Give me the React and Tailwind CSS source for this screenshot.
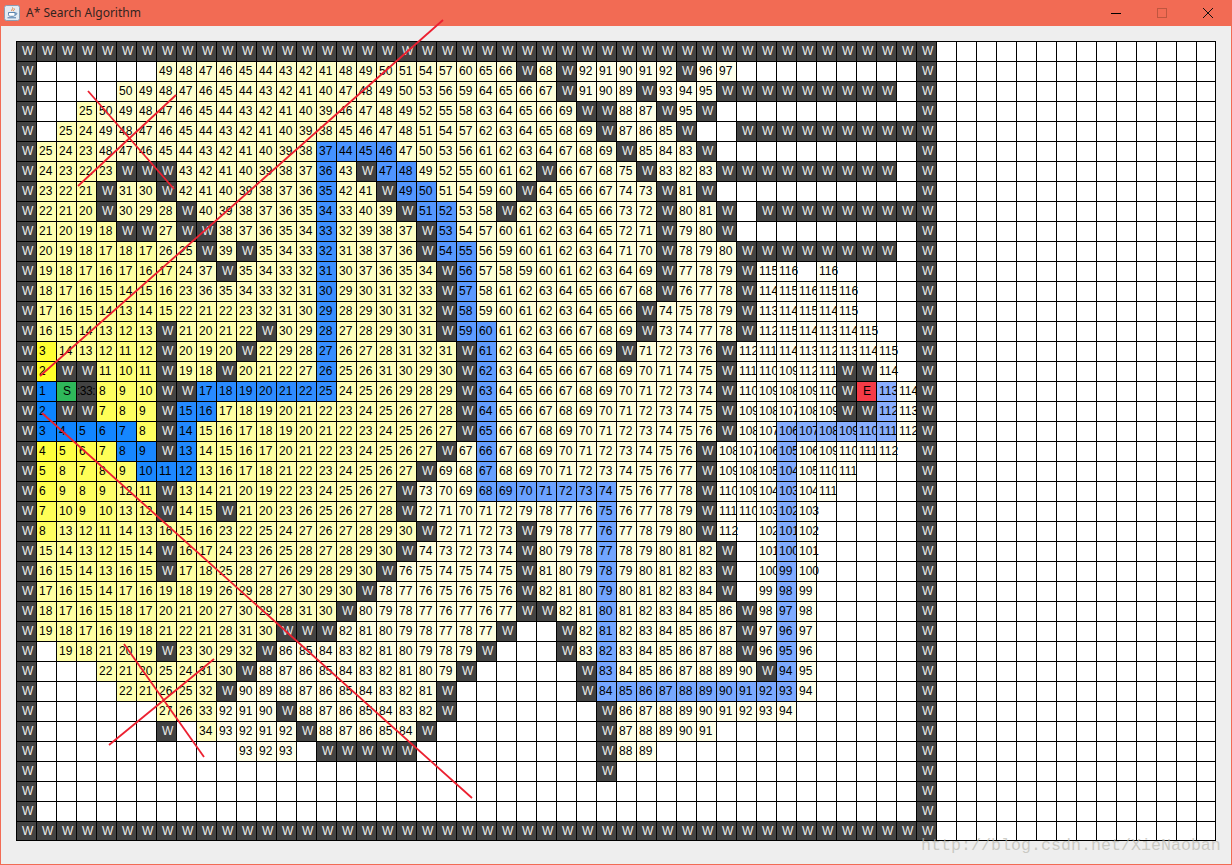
import React from "react";

const W10 = "W W W W W W W W W W";

// one string per grid row, columns 0-45 (the rest of the 60 columns stay empty)
// b = cell on the final path, S/E = start/end, X = the garbled cell beside the start
const ROWS = [
  "W W W W W W W W W W W W W W W W W W W W W W W W W W W W W W W W W W W W W W W W W W W W W W",
  "W . . . . . . 49 48 47 46 45 44 43 42 41 48 49 50 51 54 57 60 65 66 W 68 W 92 91 90 91 92 W 96 97 . . . . . . . . . W",
  "W . . . . 50 49 48 47 46 45 44 43 42 41 40 47 48 49 50 53 56 59 64 65 66 67 W 91 90 89 W 93 94 95 W W W W W W W W W . W",
  "W . . 25 50 49 48 47 46 45 44 43 42 41 40 39 46 47 48 49 52 55 58 63 64 65 66 69 W W 88 87 W 95 W . . . . . . . . . . W",
  "W . 25 24 49 48 47 46 45 44 43 42 41 40 39 38 45 46 47 48 51 54 57 62 63 64 65 68 69 W 87 86 85 W . . W W W W W W W W W W",
  "W 25 24 23 48 47 46 45 44 43 42 41 40 39 38 b37 b44 b45 b46 47 50 53 56 61 62 63 64 67 68 69 W 85 84 83 W . . . . . . . . . . W",
  "W 24 23 22 23 W W W 43 42 41 40 39 38 37 b36 43 W b47 b48 49 52 55 60 61 62 W 66 67 68 75 W 83 82 83 W W W W W W W W W . W",
  "W 23 22 21 W 31 30 W 42 41 40 39 38 37 36 b35 42 41 W b49 b50 51 54 59 60 W 64 65 66 67 74 73 W 81 W . . . . . . . . . . W",
  "W 22 21 20 W 30 29 28 W 40 39 38 37 36 35 b34 33 40 39 W b51 b52 53 58 W 62 63 64 65 66 73 72 W 80 81 W . W W W W W W W W W",
  "W 21 20 19 18 W W 27 W W 38 37 36 35 34 b33 32 39 38 37 W b53 54 57 60 61 62 63 64 65 72 71 W 79 80 W . . . . . . . . . W",
  "W 20 19 18 17 18 17 26 25 W 39 W 35 34 33 b32 31 38 37 36 W b54 b55 56 59 60 61 62 63 64 71 70 W 78 79 80 W W W W W W W W . W",
  "W 19 18 17 16 17 16 17 24 37 W 35 34 33 32 b31 30 37 36 35 34 W b56 57 58 59 60 61 62 63 64 69 W 77 78 79 W 115 116 . 116 . . . . W",
  "W 18 17 16 15 14 15 16 23 36 35 34 33 32 31 b30 29 30 31 32 33 W b57 58 61 62 63 64 65 66 67 68 W 76 77 78 W 114 115 116 115 116 . . . W",
  "W 17 16 15 14 13 14 15 22 21 22 23 32 31 30 b29 28 29 30 31 32 W b58 59 60 61 62 63 64 65 66 W 74 75 78 79 W 113 114 115 114 115 . . . W",
  "W 16 15 14 13 12 13 W 21 20 21 22 W 30 29 b28 27 28 29 30 31 W b59 b60 61 62 63 66 67 68 69 W 73 74 77 78 W 112 115 114 113 114 115 . . W",
  "W 3 14 13 12 11 12 W 20 19 20 W 22 29 28 b27 26 27 28 31 32 31 W b61 62 63 64 65 66 69 W 71 72 73 76 W 112 111 114 113 112 113 114 115 . W",
  "W 2 W W 11 10 11 W 19 18 W 20 21 22 27 b26 25 26 31 30 29 30 W b62 63 64 65 66 67 68 69 70 71 74 75 W 111 110 109 112 111 W W 114 . W",
  "W b1 S X 8 9 10 W W b17 b18 b19 b20 b21 b22 b25 24 25 26 29 28 29 W b63 64 65 66 67 68 69 70 71 72 73 74 W 110 109 108 109 110 W E b113 114 W",
  "W b2 W W 7 8 9 W b15 b16 17 18 19 20 21 22 23 24 25 26 27 28 W b64 65 66 67 68 69 70 71 72 73 74 75 W 109 108 107 108 109 W W b112 113 W",
  "W b3 b4 b5 b6 b7 8 W b14 15 16 17 18 19 20 21 22 23 24 25 26 27 W b65 66 67 68 69 70 71 72 73 74 75 76 W 108 107 b106 b107 b108 b109 b110 b111 112 W",
  "W 4 5 6 7 b8 b9 W b13 14 15 16 17 20 21 22 23 24 25 26 27 W 67 b66 67 68 69 70 71 72 73 74 75 76 W 108 107 106 b105 106 109 110 111 112 . W",
  "W 5 8 7 8 9 b10 b11 b12 13 16 17 18 21 22 23 24 25 26 27 W 69 68 b67 68 69 70 71 72 73 74 75 76 77 W 109 108 105 b104 105 110 111 . . . W",
  "W 6 9 8 9 12 11 W 13 14 21 20 19 22 23 24 25 26 27 W 73 70 69 b68 b69 b70 b71 b72 b73 b74 75 76 77 78 W 110 109 104 b103 104 111 . . . . W",
  "W 7 10 9 10 13 12 W 14 15 W 21 20 23 26 25 26 27 28 W 72 71 70 71 72 79 78 77 76 b75 76 77 78 79 W 111 110 103 b102 103 . . . . . W",
  "W 8 13 12 11 14 13 16 15 16 23 22 25 24 27 26 27 28 29 30 W 72 71 72 73 W 79 78 77 b76 77 78 79 80 W 112 . 102 b101 102 . . . . . W",
  "W 15 14 13 12 15 14 W 16 17 24 23 26 25 28 27 28 29 30 W 74 73 72 73 74 W 80 79 78 b77 78 79 80 81 82 W . 101 b100 101 . . . . . W",
  "W 16 15 14 13 16 15 W 17 18 25 28 27 26 29 28 29 30 W 76 75 74 75 74 75 W 81 80 79 b78 79 80 81 82 83 W . 100 b99 100 . . . . . W",
  "W 17 16 15 14 17 16 19 18 19 26 29 28 27 30 29 30 W 78 77 76 75 76 75 76 W 82 81 80 b79 80 81 82 83 84 W . 99 b98 99 . . . . . W",
  "W 18 17 16 15 18 17 20 21 20 27 30 29 28 31 30 W 80 79 78 77 76 77 76 77 W W 82 81 b80 81 82 83 84 85 86 W 98 b97 98 . . . . . W",
  "W 19 18 17 16 19 18 21 22 21 28 31 30 W W W 82 81 80 79 78 77 78 77 W . . W 82 b81 82 83 84 85 86 87 W 97 b96 97 . . . . . W",
  "W . 19 18 21 20 19 W 23 30 29 32 W 86 85 84 83 82 81 80 79 78 79 W . . . W 83 b82 83 84 85 86 87 88 W 96 b95 96 . . . . . W",
  "W . . . 22 21 20 25 24 31 30 W 88 87 86 85 84 83 82 81 80 79 W . . . . . W b83 84 85 86 87 88 89 90 W b94 95 . . . . . W",
  "W . . . . 22 21 26 25 32 W 90 89 88 87 86 85 84 83 82 81 W . . . . . . W b84 b85 b86 b87 b88 b89 b90 b91 b92 b93 94 . . . . . W",
  "W . . . . . . 27 26 33 92 91 90 W 88 87 86 85 84 83 82 W . . . . . . . W 86 87 88 89 90 91 92 93 94 . . . . . . W",
  "W . . . . . . W . 34 93 92 91 92 W 88 87 86 85 84 W . . . . . . . . W 87 88 89 90 91 . . . . . . . . . . W",
  "W . . . . . . . . . . 93 92 93 . W W W W W . . . . . . . . . W 88 89 . . . . . . . . . . . . . W",
  "W . . . . . . . . . . . . . . . . . . . . . . . . . . . . W . . . . . . . . . . . . . . . W",
  "W . . . . . . . . . . . . . . . . . . . . . . . . . . . . . . . . . . . . . . . . . . . . W",
  "W . . . . . . . . . . . . . . . . . . . . . . . . . . . . . . . . . . . . . . . . . . . . W",
  `${W10} ${W10} ${W10} ${W10} W W W W W W`,
];

const YELLOW_STOPS = [
  [1, 32],
  [8, 96],
  [13, 150],
  [25, 184],
  [50, 208],
  [90, 232],
  [116, 242],
];
const BLUE_STOPS = [
  [1, 10, 132],
  [20, 46, 140],
  [50, 84, 150],
  [75, 112, 164],
  [115, 140, 176],
];

// walk the stops and interpolate every channel after the first column
const shade = (stops, n) => {
  let lo = stops[0];
  let hi = stops[stops.length - 1];
  for (let i = 0; i < stops.length - 1; i++) {
    if (n >= stops[i][0] && n <= stops[i + 1][0]) {
      lo = stops[i];
      hi = stops[i + 1];
      break;
    }
  }
  const t = Math.min(1, Math.max(0, (n - lo[0]) / (hi[0] - lo[0])));
  return lo.slice(1).map((v, i) => Math.round(v + (hi[i + 1] - v) * t));
};

const Cell = ({ value }) => {
  const base = "border-l border-t border-black leading-[19px] whitespace-nowrap";

  if (value === ".") return <div className={base}></div>;
  if (value === "W")
    return <div className={`${base} relative bg-[#434343] text-[#ececec] pl-[5px]`}>W</div>;
  if (value === "S")
    return <div className={`${base} relative bg-[#2fb85a] text-black pl-[6px]`}>S</div>;
  if (value === "E")
    return <div className={`${base} relative bg-[#f53b47] text-black pl-[6px]`}>E</div>;
  if (value === "X")
    return <div className={`${base} relative bg-[#434343] text-black tracking-[-0.5px]`}>:33:</div>;

  if (value[0] === "b") {
    const n = parseInt(value.slice(1));
    const [r, g] = shade(BLUE_STOPS, n);
    return (
      <div
        className={`${base} relative text-black pl-[2px]`}
        style={{ backgroundColor: `rgb(${r},${g},255)` }}
      >
        {n}
      </div>
    );
  }

  const n = parseInt(value);
  const [b] = shade(YELLOW_STOPS, n);
  return (
    <div
      className={`${base} relative text-black pl-[2px]`}
      style={{ backgroundColor: `rgb(255,255,${b})` }}
    >
      {n}
    </div>
  );
};

const JavaIcon = () => (
  <svg width="16" height="16" viewBox="0 0 16 16" fill="none">
    <rect x="0.5" y="0.5" width="15" height="15" rx="2" fill="#e4ebf3" stroke="#8b9db3" />
    <path d="M8.5 2.5c1.5 1.2-1.8 2.2-.6 3.6M10.4 3.6c.8.9-1.5 1.4-.7 2.6" stroke="#e2762a" strokeWidth="1" />
    <path d="M4.5 7.5h6.5v2.2c0 1-.9 1.6-1.8 1.6H6.3c-.9 0-1.8-.6-1.8-1.6z" fill="#fff" stroke="#4a78a8" strokeWidth="0.9" />
    <path d="M11 8h1.2c1 0 1 1.8-1.2 2" stroke="#4a78a8" strokeWidth="0.9" />
    <path d="M3.5 12.8h8.5" stroke="#4a78a8" strokeWidth="1" />
  </svg>
);

const RED_LINES = [
  [442, 20, 39, 376],
  [87, 91, 173, 189],
  [175, 95, 77, 186],
  [41, 413, 471, 798],
  [213, 659, 108, 745],
  [123, 644, 203, 757],
];

export default function App() {
  return (
    <div className="relative w-[1232px] h-[865px] flex flex-col bg-[#eeeeee] border-x border-b border-[#f26b54] overflow-hidden font-['Liberation_Sans',sans-serif]">
      {/* title bar */}
      <div className="flex items-center h-[26px] shrink-0 bg-[#f26b54] pl-[3px]">
        <JavaIcon />
        <span className="ml-[6px] text-[12px] text-[#33241f] font-['Noto_Sans',sans-serif]">
          A* Search Algorithm
        </span>
        <div className="ml-auto flex h-full">
          <div className="w-[46px] flex items-center justify-center">
            <div className="w-[10px] h-px bg-black"></div>
          </div>
          <div className="w-[46px] flex items-center justify-center">
            <div className="w-[10px] h-[10px] border border-[#c0563f]"></div>
          </div>
          <div className="w-[46px] flex items-center justify-center">
            <svg width="10" height="10" viewBox="0 0 10 10" stroke="#111111" strokeWidth="1">
              <path d="M0 0l10 10M10 0L0 10" />
            </svg>
          </div>
        </div>
      </div>

      {/* map panel */}
      <div className="pl-[15px] pt-[15px]">
        <div className="grid grid-cols-[repeat(60,20px)] grid-rows-[repeat(40,20px)] w-[1200px] h-[800px] bg-white border-r border-b border-black overflow-hidden text-[12px]">
          {ROWS.map((row, r) => {
            const cells = row.split(" ");
            return Array.from({ length: 60 }, (_, c) => (
              <Cell key={`${r}-${c}`} value={cells[c] || "."} />
            ));
          })}
        </div>
      </div>

      {/* lines scribbled over the screenshot */}
      <svg className="absolute top-0 left-0 w-[1232px] h-[865px] pointer-events-none" viewBox="0 0 1232 865">
        {RED_LINES.map(([x1, y1, x2, y2], i) => (
          <line key={i} x1={x1} y1={y1} x2={x2} y2={y2} stroke="#ec2030" strokeWidth="1.8" />
        ))}
      </svg>

      {/* watermark */}
      <div className="absolute left-[920px] top-[836px] text-[16.67px] leading-[20px] text-[#b9b9b0]/70 font-['Liberation_Mono',monospace] whitespace-nowrap">
        http://blog.csdn.net/XieNaoban
      </div>
    </div>
  );
}
